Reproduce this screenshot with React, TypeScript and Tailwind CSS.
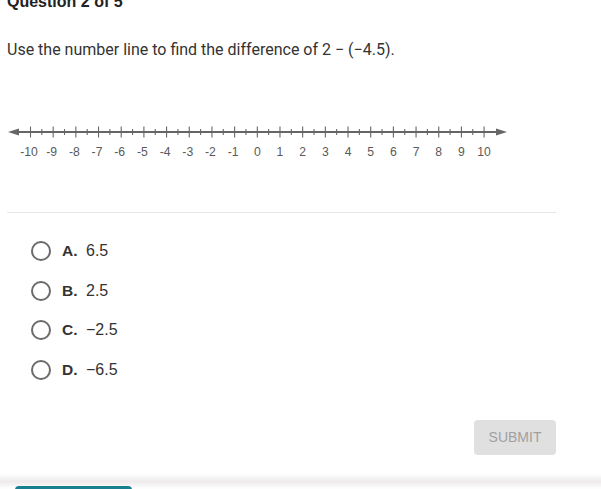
import React from "react"

const ticks = Array.from({ length: 41 }, (_, i) => i - 20)

function NumberLine() {
	const x0 = 30.5
	const unit = 22.68
	return (
		<svg width="520" height="45" viewBox="0 0 520 45" className="block">
			<line x1="12" y1="15" x2="503" y2="15" stroke="#666" strokeWidth="1.8" />
			<polygon points="8,15 19,11.5 19,18.5" fill="#666" />
			<polygon points="507,15 496,11.5 496,18.5" fill="#666" />
			{ticks.map((t) => {
				const x = x0 + ((t + 20) / 2) * unit
				const major = t % 2 === 0
				return (
					<line
						key={t}
						x1={x}
						x2={x}
						y1={major ? 9.5 : 12}
						y2={major ? 20.5 : 18}
						stroke="#666"
						strokeWidth="1.1"
					/>
				)
			})}
			{ticks
				.filter((t) => t % 2 === 0)
				.map((t) => {
					const v = t / 2
					const x = x0 + (v + 10) * unit
					return (
						<text
							key={v}
							x={v < 0 ? x - 1.5 : x}
							y="38.5"
							textAnchor="middle"
							fontSize="12.2"
							fill="#5a5a5a"
							fontFamily="Liberation Sans, Arial, sans-serif"
						>
							{v}
						</text>
					)
				})}
		</svg>
	)
}

const options = [
	{ letter: "A.", value: "6.5" },
	{ letter: "B.", value: "2.5" },
	{ letter: "C.", value: "\u22122.5" },
	{ letter: "D.", value: "\u22126.5" },
]

export default function App() {
	return (
		<div className="flex flex-col w-[601px] h-[489px] overflow-hidden bg-white">
			<div className="px-[7px]">
				<h2 className="-mt-[7px] text-[16px] leading-[18px] font-bold text-[#222] font-['Liberation_Sans',Arial,sans-serif]">
					Question 2 of 5
				</h2>
				<p className="mt-[29px] text-[16px] leading-[20px] text-[#333] font-['Roboto',sans-serif]">
					Use the number line to find the difference of 2 − (−4.5).
				</p>
			</div>

			<div className="mt-[57px]">
				<NumberLine />
			</div>

			<div className="mx-[7px] w-[549px] mt-[50px] border-t border-[#e6e6e6]" />

			<ul className="mt-[28px] flex flex-col gap-[19.5px] font-['Liberation_Sans',Arial,sans-serif] text-[16px] text-[#333]">
				{options.map((o) => (
					<li key={o.letter} className="flex items-center h-[20px] pl-[31px]">
						<span className="w-[20px] h-[20px] rounded-full border-2 border-[#6b6b6b]" />
						<span className="ml-[11px] font-bold w-[24px] text-[15.5px]">{o.letter}</span>
						<span>{o.value}</span>
					</li>
				))}
			</ul>

			<div className="w-[556px] flex justify-end mt-[40px]">
				<button className="w-[82px] h-[35px] rounded-[4px] bg-[#e0e0e0] text-[#a0a0a0] text-[14px] font-['Liberation_Sans',Arial,sans-serif]">
					SUBMIT
				</button>
			</div>

			<div className="mt-auto h-[15px] bg-gradient-to-b from-[#ffffff] via-[#eeeaec] to-[#ffffff] relative">
				<div className="absolute left-[15px] top-[12px] w-[117px] h-[6px] rounded-t-[4px] bg-[#177f8f]" />
			</div>
		</div>
	)
}
